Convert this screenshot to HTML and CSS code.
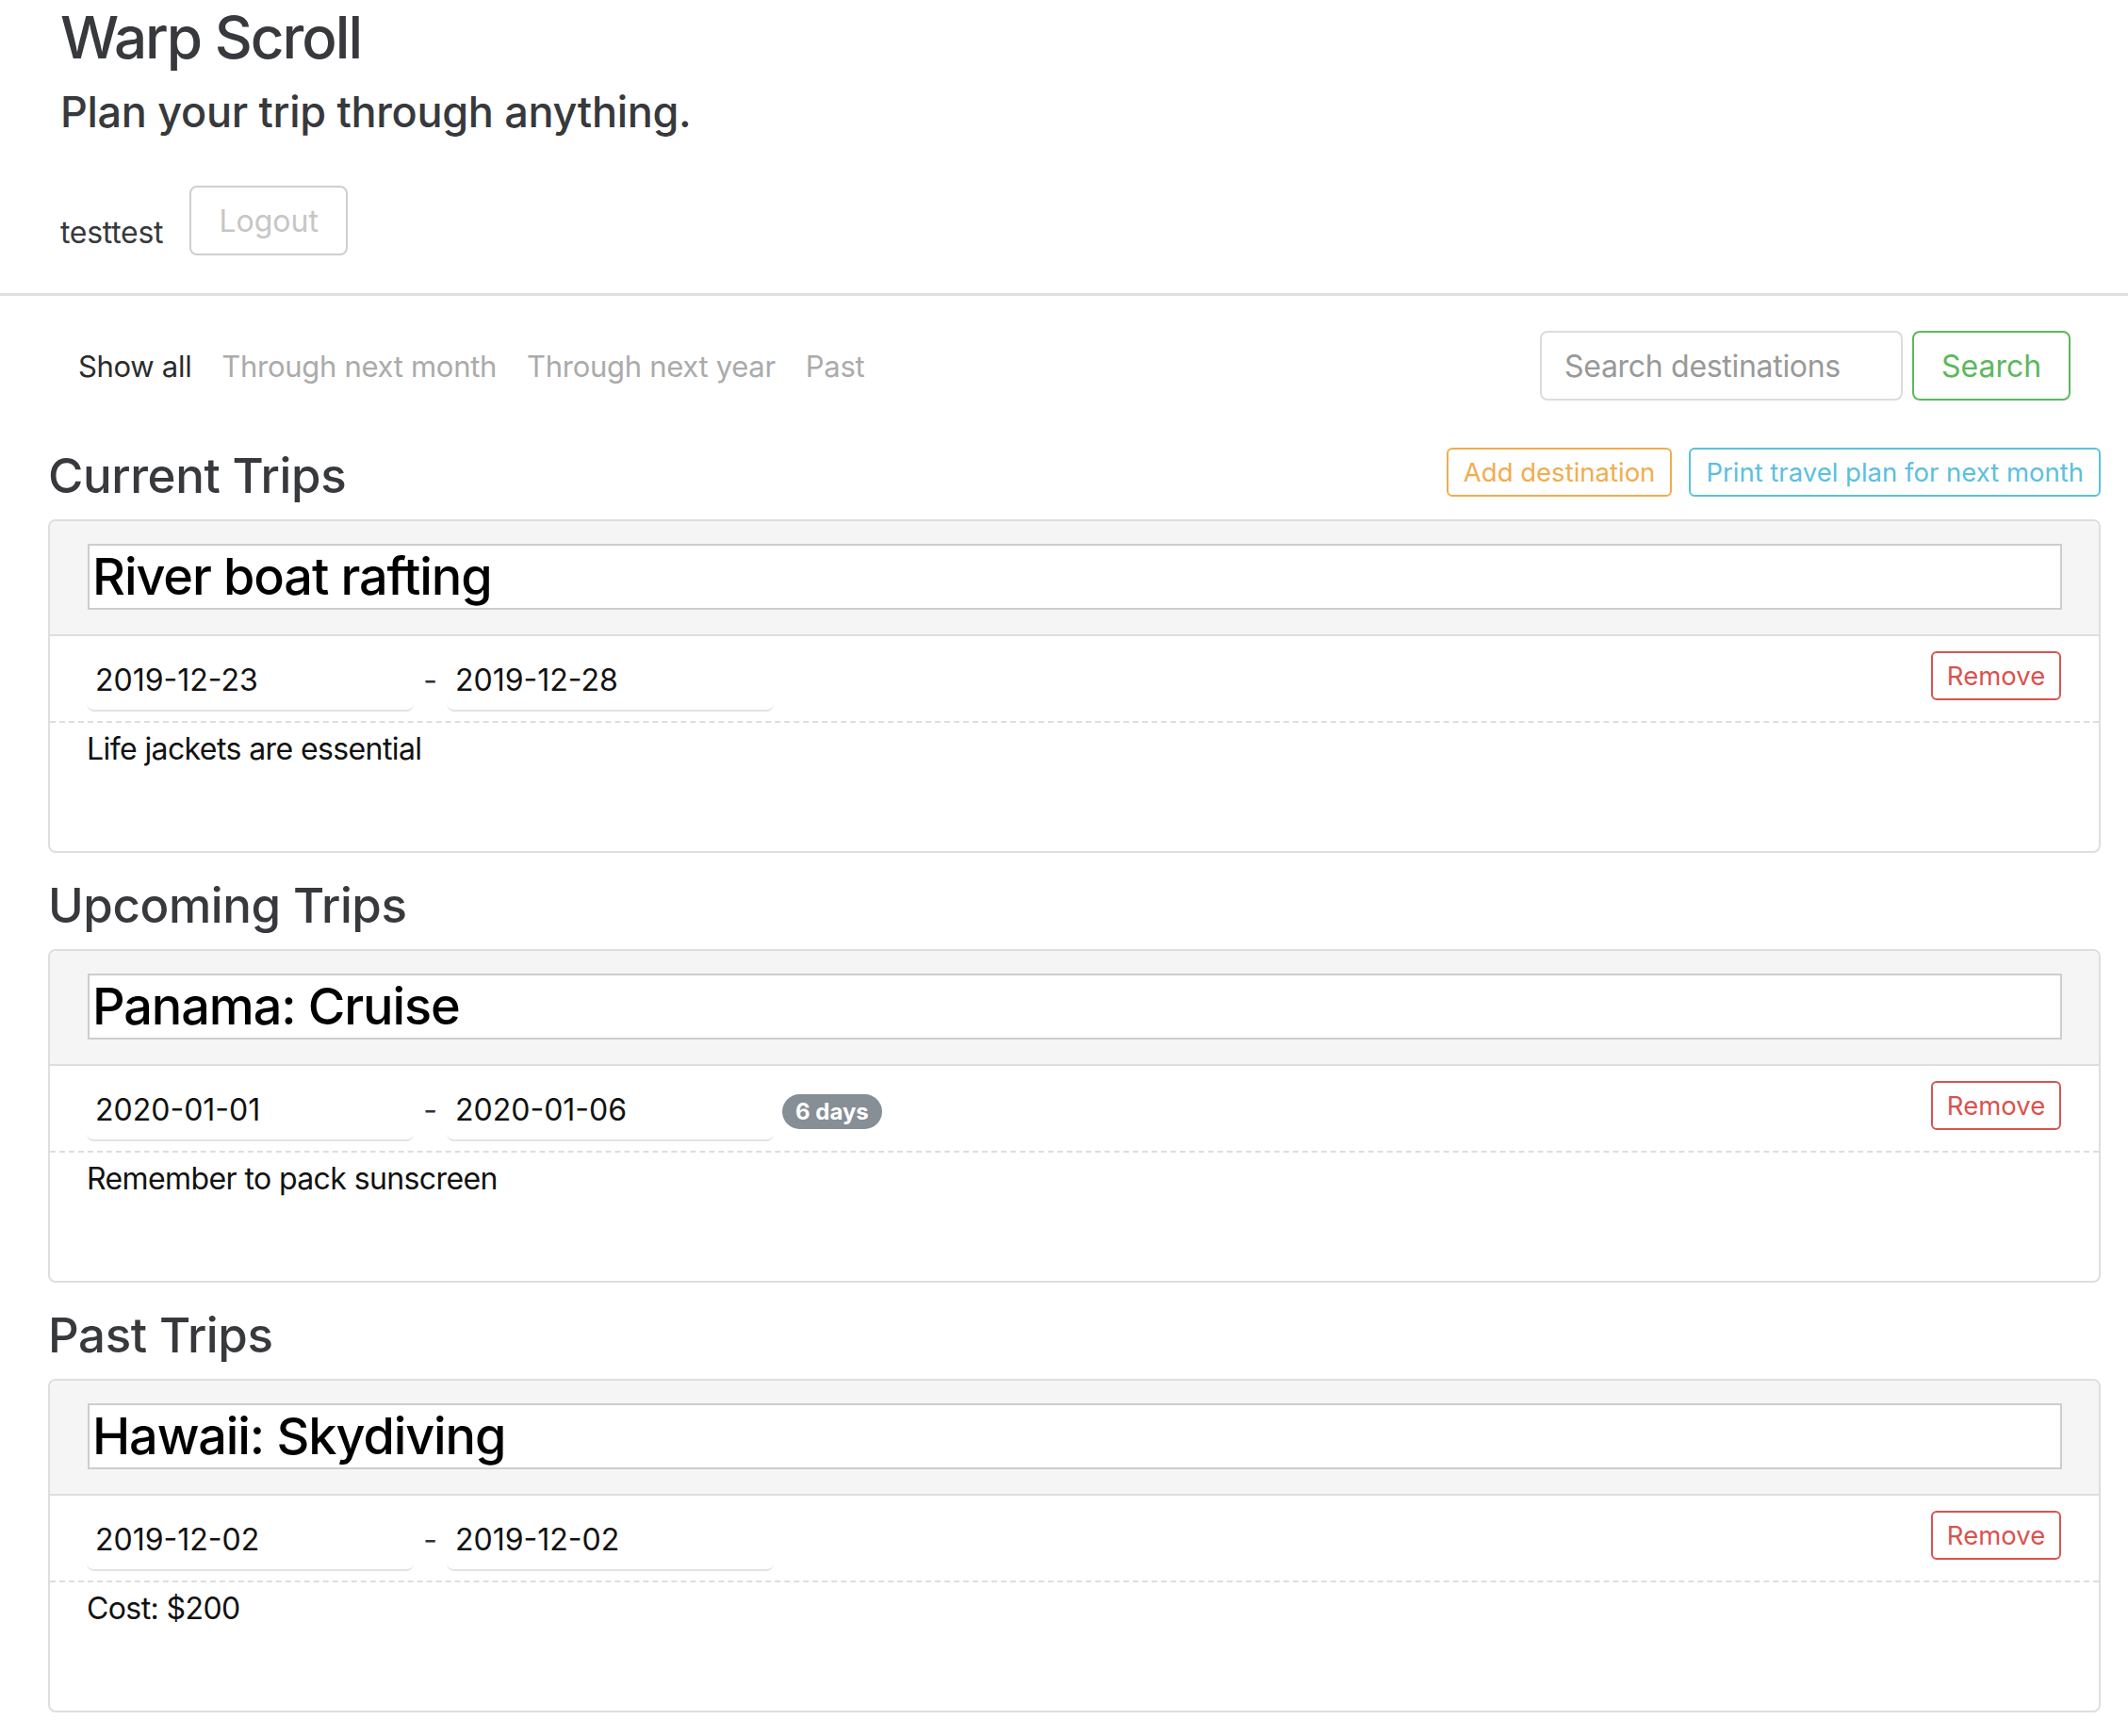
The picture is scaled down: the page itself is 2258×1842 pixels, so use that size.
FILE: index.html
```html
<!DOCTYPE html>
<html lang="en">
<head>
<meta charset="utf-8">
<title>Warp Scroll</title>
<link rel="stylesheet" href="styles.css">
</head>
<body>
<header class="top">
  <h1 class="brand">Warp Scroll</h1>
  <p class="tagline">Plan your trip through anything.</p>
  <div class="user-row">
    <span class="username">testtest</span>
    <button class="btn btn-logout">Logout</button>
  </div>
</header>
<div class="divider"></div>
<main class="main">
  <div class="toolbar">
    <nav class="filters">
      <a class="filter active">Show all</a>
      <a class="filter">Through next month</a>
      <a class="filter">Through next year</a>
      <a class="filter">Past</a>
    </nav>
    <div class="search">
      <input class="search-input" type="text" placeholder="Search destinations">
      <button class="btn btn-search">Search</button>
    </div>
  </div>

  <section class="group">
    <div class="group-head first">
      <h2 class="group-title">Current Trips</h2>
      <div class="actions">
        <button class="btn btn-sm btn-warning">Add destination</button>
        <button class="btn btn-sm btn-info">Print travel plan for next month</button>
      </div>
    </div>
    <article class="card">
      <div class="card-head"><div class="title-input">River boat rafting</div></div>
      <div class="card-row">
        <div class="date">2019-12-23</div>
        <span class="dash">-</span>
        <div class="date">2019-12-28</div>
        <button class="btn btn-sm btn-remove">Remove</button>
      </div>
      <div class="notes">Life jackets are essential</div>
    </article>
  </section>

  <section class="group">
    <div class="group-head">
      <h2 class="group-title">Upcoming Trips</h2>
    </div>
    <article class="card">
      <div class="card-head"><div class="title-input">Panama: Cruise</div></div>
      <div class="card-row">
        <div class="date">2020-01-01</div>
        <span class="dash">-</span>
        <div class="date">2020-01-06</div>
        <span class="badge">6 days</span>
        <button class="btn btn-sm btn-remove">Remove</button>
      </div>
      <div class="notes">Remember to pack sunscreen</div>
    </article>
  </section>

  <section class="group">
    <div class="group-head">
      <h2 class="group-title">Past Trips</h2>
    </div>
    <article class="card">
      <div class="card-head"><div class="title-input">Hawaii: Skydiving</div></div>
      <div class="card-row">
        <div class="date">2019-12-02</div>
        <span class="dash">-</span>
        <div class="date">2019-12-02</div>
        <button class="btn btn-sm btn-remove">Remove</button>
      </div>
      <div class="notes">Cost: $200</div>
    </article>
  </section>
</main>
</body>
</html>
```

FILE: styles.css
```css
* { box-sizing: border-box; }

body {
  margin: 0;
  font-family: Inter, "Noto Sans", sans-serif;
  color: #212529;
  background: #fff;
}

.top {
  padding: 0 0 0 64px;
}

.brand {
  margin: 2px 0 0;
  font-size: 62px;
  line-height: 76px;
  font-weight: 500;
  letter-spacing: -2px;
  color: #37393c;
}

.tagline {
  margin: 15px 0 0;
  font-size: 45px;
  line-height: 52px;
  font-weight: 500;
  letter-spacing: -0.3px;
  color: #37393c;
}

.user-row {
  display: flex;
  align-items: flex-start;
  gap: 28px;
  margin-top: 52px;
}

.username {
  margin-top: 30px;
  font-size: 32px;
  line-height: 40px;
  letter-spacing: -0.3px;
  color: #37393c;
}

.btn {
  display: inline-flex;
  align-items: center;
  justify-content: center;
  background: #fff;
  font-family: inherit;
  border-style: solid;
  border-width: 2px;
  cursor: pointer;
  white-space: nowrap;
}

.btn-logout {
  width: 168px;
  height: 74px;
  border-color: #cfcfcf;
  border-radius: 8px;
  color: #c6c6c6;
  font-size: 32px;
}

.divider {
  margin-top: 40px;
  height: 3px;
  background: #e0e0e0;
}

.main {
  padding: 37px 29px 0 51px;
}

.toolbar {
  display: flex;
  align-items: center;
  justify-content: space-between;
  height: 74px;
}

.filters {
  display: flex;
  margin-left: 16px;
}

.filter {
  padding: 0 16px;
  font-size: 31px;
  letter-spacing: -0.3px;
  color: #ababab;
}

.filter.active {
  color: #2b2b2b;
}

.search {
  display: flex;
  gap: 10px;
  margin-right: 32px;
}

.search-input {
  width: 385px;
  height: 74px;
  border: 2px solid #dcdcdc;
  border-radius: 8px;
  padding: 0 24px;
  font-family: inherit;
  font-size: 32px;
  letter-spacing: -0.3px;
  color: #333;
  outline: none;
}

.search-input::placeholder {
  color: #999;
}

.btn-search {
  width: 168px;
  height: 74px;
  border-color: #5cb85c;
  border-radius: 8px;
  color: #5cb85c;
  font-size: 32px;
}

.group-head {
  display: flex;
  align-items: flex-start;
  justify-content: space-between;
  margin-top: 26px;
}

.group-head.first {
  margin-top: 50px;
}

.group-title {
  margin: 0;
  font-size: 51px;
  line-height: 60px;
  font-weight: 500;
  letter-spacing: -0.4px;
  color: #37393c;
}

.actions {
  display: flex;
  gap: 18px;
}

.btn-sm {
  height: 52px;
  padding: 0 16px;
  border-radius: 6px;
  font-size: 27.5px;
}

.btn-warning {
  border-color: #f0ad4e;
  color: #f0ad4e;
}

.btn-info {
  border-color: #5bc0de;
  color: #5bc0de;
}

.btn-remove {
  margin-left: auto;
  width: 138px;
  border-color: #d9534f;
  color: #d9534f;
}

.card {
  margin-top: 16px;
  border: 2px solid #dedede;
  border-radius: 8px;
  overflow: hidden;
}

.card-head {
  background: #f5f5f5;
  padding: 24px 39px 26px 40px;
  border-bottom: 2px solid #dedede;
}

.title-input {
  height: 70px;
  border: 2px solid #cdcdcd;
  background: #fff;
  padding: 0 3px;
  font-size: 54px;
  line-height: 66px;
  font-weight: 500;
  letter-spacing: -1.1px;
  color: #000;
}

.card-row {
  display: flex;
  align-items: flex-start;
  padding: 16px 40px 0 39px;
}

.date {
  width: 347px;
  height: 64px;
  padding-left: 9px;
  border-bottom: 2px solid #e3e3e3;
  border-radius: 8px;
  font-size: 32px;
  line-height: 62px;
  color: #111;
}

.dash {
  width: 35px;
  text-align: center;
  font-size: 32px;
  line-height: 62px;
  color: #333;
}

.badge {
  align-self: center;
  margin-left: 9px;
  height: 37px;
  padding: 0 14px;
  border-radius: 19px;
  background: #868e96;
  color: #fff;
  font-size: 24px;
  font-weight: 700;
  line-height: 37px;
}

.notes {
  margin-top: 10px;
  height: 138px;
  padding: 8px 39px 0;
  border-top: 2px dashed #dedede;
  font-size: 32px;
  line-height: 40px;
  letter-spacing: -0.6px;
  color: #111;
}
```
